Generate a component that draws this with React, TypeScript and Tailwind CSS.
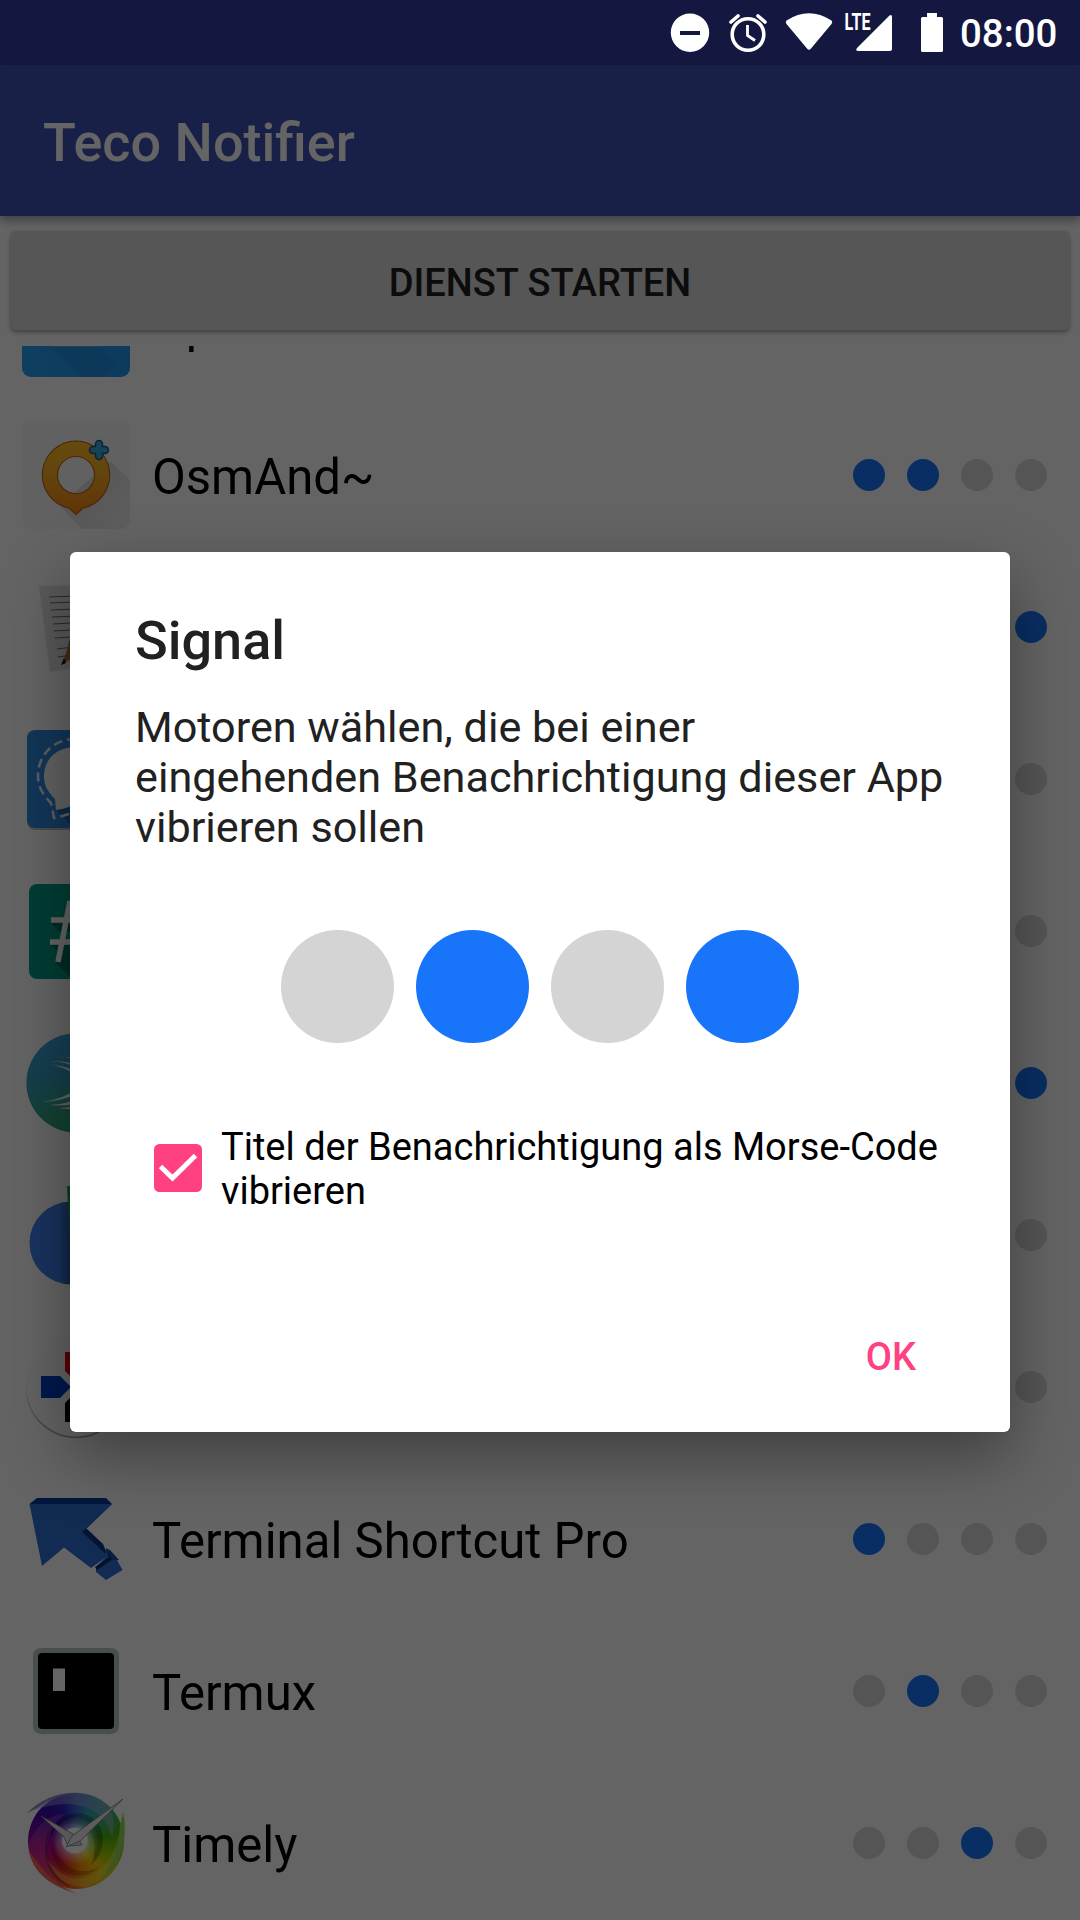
import React from 'react';

const BLUE = 'bg-[#1874f8]';
const GREY = 'bg-[#d4d4d4]';

function Dots({ on, big = false }: { on: number[]; big?: boolean }) {
  return (
    <div className="flex gap-[22px]">
      {[0, 1, 2, 3].map((i) => (
        <span
          key={i}
          className={`${big ? 'size-[113px]' : 'size-8'} rounded-full ${on.includes(i) ? BLUE : GREY}`}
        />
      ))}
    </div>
  );
}

function OpenInIcon() {
  return (
    <svg viewBox="0 0 108 108" className="size-[108px]">
      <defs>
        <linearGradient id="op" x1="0" y1="0" x2="1" y2="0">
          <stop offset="0" stopColor="#259cf0" />
          <stop offset="1" stopColor="#2094ea" />
        </linearGradient>
      </defs>
      <rect width="108" height="108" rx="9" fill="url(#op)" />
      <path d="M29 78H79L94 93L80 108H60Z" fill="#1d80ca" opacity=".35" />
      <rect x="29" y="60" width="50" height="17.800" rx="2" fill="#7f9cb0" />
    </svg>
  );
}

function OsmAndIcon() {
  return (
    <svg viewBox="0 0 108 108" className="size-[108px]">
      <defs>
        <linearGradient id="osm" x1="0" y1="0" x2="0" y2="1">
          <stop offset="0" stopColor="#fdbb24" />
          <stop offset=".45" stopColor="#f6ac22" />
          <stop offset="1" stopColor="#f57f13" />
        </linearGradient>
        <linearGradient id="osmShade" x1="0" y1="0" x2="1" y2="1">
          <stop offset="0.3" stopColor="#d6d6d6" />
          <stop offset="1" stopColor="#eeeeee" />
        </linearGradient>
      </defs>
      <rect width="108" height="108" rx="9" fill="#f3f3f3" />
      <path d="M88 40L108 59V99a9 9 0 0 1-9 9H60L38 85Z" fill="url(#osmShade)" />
      <path
        fillRule="evenodd"
        d="M54 20a34 34 0 0 1 7 67.200L54 93.500L47 87.200a34 34 0 0 1 7-67.200Zm0 15.500a18.500 18.500 0 1 0 0 37a18.500 18.500 0 0 0 0-37Z"
        fill="url(#osm)"
        stroke="#b8601c"
        strokeWidth="1.100"
      />
      <path d="M77 23V35M71 29H83" stroke="#145a86" strokeWidth="8.500" strokeLinecap="round" />
      <path d="M77 23V35M71 29H83" stroke="#3aa6e2" strokeWidth="5.500" strokeLinecap="round" />
    </svg>
  );
}

function NotesIcon() {
  return (
    <svg viewBox="0 0 108 108" className="size-[108px]">
      <path d="M17 13L92 11L95 88L28 99Z" fill="#dedede" />
      <g stroke="#6a6a6a" strokeWidth="1.200">
        <path d="M27 24L80 22M28 30L80 28M29 37L81 35M30 44L82 42M31 51L82 48M32 58L83 55M33 65L83 62M35 76L84 70M36 84L84 77" />
      </g>
      <path d="M40 92L47 71L72 30L84 37L57 80Z" fill="#b06a34" />
      <path d="M46 73L48 66L72 28L68 50Z" fill="#118a1c" />
      <path d="M39 92L42 85L44 90Z" fill="#111" />
    </svg>
  );
}

function SignalIcon() {
  return (
    <svg viewBox="0 0 108 108" className="size-[108px]">
      <rect x="5" y="6" width="98" height="99" rx="8" fill="#000" opacity=".25" />
      <rect x="5" y="5" width="98" height="98" rx="8" fill="#2f88dc" />
      <path d="M34 85L50 81L103 59V95a8 8 0 0 1-8 8H52Z" fill="#2068ac" />
      <path d="M54 22c20 0 32 13 32 29s-12 29-32 29c-4 0-7 3-20 5l-1-11c-8-8-11-14-11-23c0-16 12-29 32-29Z" fill="#f6f6f6" />
      <path
        d="M54 14c24 0 38 17 38 37s-14 37-38 37c-6 0-12 3-22 5l-3-15c-8-8-13-16-13-27c0-20 14-37 38-37Z"
        fill="none"
        stroke="#eee"
        strokeWidth="2.500"
        strokeDasharray="9 5"
      />
    </svg>
  );
}

function SlackIcon() {
  return (
    <svg viewBox="0 0 108 108" className="size-[108px]">
      <rect x="7" y="7" width="94" height="95" rx="8" fill="#009a84" />
      <path d="M29 46L38 55H48V46ZM29 68L38 77H43L48 68ZM34 86L50 102H101V49L70 29Z" fill="#006e5c" />
      <path d="M36 85L48 24M58 85L70 24M29 43H78M28 65H76" stroke="#fafafa" strokeWidth="5.500" fill="none" />
    </svg>
  );
}

function SwiftIcon() {
  return (
    <svg viewBox="0 0 108 108" className="size-[108px]">
      <defs>
        <linearGradient id="swift" x1="0.3" y1="0" x2="0.45" y2="1">
          <stop offset="0" stopColor="#3c9cdc" />
          <stop offset=".5" stopColor="#33a0b4" />
          <stop offset="1" stopColor="#30a866" />
        </linearGradient>
      </defs>
      <circle cx="54" cy="54" r="49.500" fill="#2c8c8c" />
      <circle cx="54" cy="53.500" r="49" fill="url(#swift)" />
      <g fill="#f4f4f4">
        <path d="M20 35Q42 35 60 51V45Q42 35 20 35Z" />
        <path d="M28 32Q46 32 60 42V38Q44 31 28 32ZM36 29Q50 27 60 34V30Q48 27 36 29Z" />
        <path d="M20 73Q40 71 60 57V63Q42 72 20 73Z" />
        <path d="M28 76Q46 75 60 68V72Q46 78 28 76ZM36 79Q50 79 60 75V79Q48 81 36 79Z" />
      </g>
    </svg>
  );
}

function BallIcon() {
  return (
    <svg viewBox="0 0 108 108" className="size-[108px]">
      <defs>
        <linearGradient id="ball" x1="0" y1="0" x2="1" y2="0">
          <stop offset="0" stopColor="#4080f0" />
          <stop offset=".35" stopColor="#3f7ee8" />
          <stop offset=".5" stopColor="#2a559c" />
        </linearGradient>
      </defs>
      <circle cx="49" cy="62" r="41.500" fill="url(#ball)" />
      <path d="M45 5L88 8L85 66L48 66Z" fill="#0ba04c" />
    </svg>
  );
}

function TeamIcon() {
  return (
    <svg viewBox="0 0 108 108" className="size-[108px]">
      <circle cx="54" cy="55.200" r="50" fill="#000" opacity=".35" />
      <circle cx="54" cy="53.500" r="50" fill="#f8f8f8" />
      <path d="M19 43H38L49 54L38 65H19Z" fill="#003cc0" />
      <path d="M43 19H65V38L54 49L43 38Z" fill="#dc000a" />
      <path d="M43 89H65V70L54 59L43 70Z" fill="#050505" />
    </svg>
  );
}

function ArrowIcon() {
  return (
    <svg viewBox="0 0 108 108" className="size-[108px]">
      <path d="M7.500 19L15 13H84L90 19L65 43L48 45Z" fill="#063a9c" />
      <path d="M64 43L81 59L86 71L82 73L59 47Z" fill="#083484" />
      <path d="M7.500 19H90L64.500 43L60 47L86 71L69 83L42 62.500L20 81Z" fill="#2c6cd0" />
      <path d="M84 64L88 65L95 75L100.500 85L84 95L74 87V82L83 73Z" fill="#2c6cd0" />
      <path d="M84 63L90 69L91 74L75 85L73 82L87 72Z" fill="#082c70" />
      <path d="M84 63L89 66L97 75L90 75Z" fill="#1b4ca4" />
    </svg>
  );
}

function TermuxIcon() {
  return (
    <svg viewBox="0 0 108 108" className="size-[108px]">
      <rect x="11" y="11" width="86" height="86" rx="8" fill="#b5c4c2" />
      <rect x="16" y="16" width="76" height="76" rx="4" fill="#000" />
      <rect x="31" y="31.500" width="12" height="22.500" fill="#fafafa" />
    </svg>
  );
}

function TimelyIcon() {
  return (
    <div className="relative size-[108px]">
      <div className="absolute left-[6px] top-[4px] size-[96px] rounded-full bg-[conic-gradient(from_0deg,#3a68c8,#30a0b8_20deg,#38b078_50deg,#48b010_80deg,#98c808_110deg,#f0c808_140deg,#f89008_170deg,#f04818_195deg,#d81850_225deg,#a80090_260deg,#6008a0_290deg,#3808b0_315deg,#3020b8_340deg,#3a68c8)]" />
      <svg viewBox="0 0 108 108" className="absolute left-0 top-0 size-[108px]">
        <defs>
          <radialGradient id="core">
            <stop offset="0" stopColor="#fff" />
            <stop offset=".5" stopColor="#fafafa" />
            <stop offset=".58" stopColor="#fff" stopOpacity=".5" />
            <stop offset="1" stopColor="#fff" stopOpacity="0" />
          </radialGradient>
        </defs>
        <path d="M5 24Q28 2 58 4Q76 5 86 17Q95 30 90 48Q82 22 60 17Q36 11 5 24Z" fill="#b0a8e0" opacity=".45" />
        <path d="M5 24Q28 2 58 4Q34 5 15 19Z" fill="#9884c4" />
        <path d="M101 23Q108 46 98 67Q88 90 64 98Q34 98 24 68Q44 98 70 86Q94 72 98 38Z" fill="#e8f060" opacity=".35" />
        <path d="M101 23Q106 46 97 68Q88 86 78 91Q97 70 98 38Z" fill="#90d458" />
        <path d="M6 56Q8 88 55 105Q24 84 25 58Q27 36 43 25Q18 26 6 56Z" fill="#ff80b0" opacity=".24" />
        <path d="M7 62Q12 92 55 105Q30 96 7 62Z" fill="#f06050" />
        <path d="M27 50Q36 24 58 24Q80 28 81 50Q81 66 69 76Q77 56 68 44Q54 28 38 38Q30 43 27 50Z" fill="#000" opacity=".26" />
        <path d="M25 58Q26 84 48 98Q30 92 24 72Q20 50 30 36Q25 48 25 58Z" fill="#000" opacity=".25" />
        <path d="M36 38Q28 60 42 74Q58 88 78 78Q58 94 38 80Q22 64 36 38Z" fill="#000" opacity=".2" />
        <circle cx="53" cy="51.500" r="24" fill="url(#core)" />
        <path d="M19 27L51 45L57 51L60 56L46 57L42 48Z" fill="#ddd" stroke="#777" strokeWidth=".8" />
        <path d="M101 10L58 52L44 58L50 47Z" fill="#e8e8e8" stroke="#777" strokeWidth=".8" />
      </svg>
    </div>
  );
}

// Rows fully covered by the dialog carry no visible label.
const rows = [
  { name: 'OpenIn', Icon: OpenInIcon, on: [0] },
  { name: 'OsmAnd~', Icon: OsmAndIcon, on: [0, 1] },
  { name: '', Icon: NotesIcon, on: [3] },
  { name: '', Icon: SignalIcon, on: [1] },
  { name: '', Icon: SlackIcon, on: [0] },
  { name: '', Icon: SwiftIcon, on: [3] },
  { name: '', Icon: BallIcon, on: [0] },
  { name: '', Icon: TeamIcon, on: [1] },
  { name: 'Terminal Shortcut Pro', Icon: ArrowIcon, on: [0] },
  { name: 'Termux', Icon: TermuxIcon, on: [1] },
  { name: 'Timely', Icon: TimelyIcon, on: [2] },
];

function StatusBar() {
  return (
    <div className="flex h-[65px] items-center justify-end pr-[22px] text-white">
      <svg viewBox="670 0 230 65" className="h-[65px] w-[230px]" fill="currentColor">
        <path fillRule="evenodd" d="M690 13.500a19.200 19.200 0 1 0 0 38.400a19.200 19.200 0 0 0 0-38.400ZM680 31h20v4h-20Z" />
        <g fill="none" stroke="currentColor">
          <circle cx="748" cy="34.500" r="15.800" strokeWidth="3.600" />
          <path d="M747.500 25V35.500L755 40.500" strokeWidth="2.800" />
          <path d="M738 16L731 22M758 16L765 22" strokeWidth="3.600" strokeLinecap="round" />
        </g>
        <path d="M786.500 20.500Q809 6 831.500 20.500Q833 22 831.500 24L811 48.500Q809 51 807 48.500L786.500 24Q785 22 786.500 20.500Z" />
        <path d="M889.500 15.500Q892 14 892 17V49Q892 51 890 51H858Q855 50.500 857 48Z" />
        <text x="844.500" y="30" fontSize="23" fontWeight="700" fontFamily="Roboto" textLength="26" lengthAdjust="spacingAndGlyphs">LTE</text>
      </svg>
      <svg viewBox="0 0 22 39" className="ml-[21px] h-[39px] w-[22px]" fill="currentColor">
        <path d="M6 0H16V4H20.500Q22 4 22 5.500V37.500Q22 39 20.500 39H1.500Q0 39 0 37.500V5.500Q0 4 1.500 4H6Z" />
      </svg>
      <span className="ml-[17px] w-[98px] whitespace-nowrap pt-[3px] text-[38.400px] font-medium leading-[62px]">08:00</span>
    </div>
  );
}

export default function App() {
  return (
    <div className="relative h-[1920px] w-[1080px] overflow-hidden bg-[#fafafa] font-['Roboto',sans-serif]">
      <div className="flex h-full flex-col">
        <div className="h-[65px] shrink-0 bg-[#343ea0]" />
        <header className="flex h-[151px] shrink-0 items-center bg-[#3f51b5] pl-[43px] pt-[5px] shadow-[0_4px_10px_rgba(0,0,0,0.4)]">
          <h1 className="text-[54px] font-medium leading-none text-[#fafafa]">Teco Notifier</h1>
        </header>
        <div className="shrink-0 px-[11px] pb-4 pt-[15px]">
          <button className="flex h-[99px] w-full items-center justify-center rounded-[5px] bg-[#d6d6d6] pt-[5px] text-[38px] font-medium text-[#202020] shadow-[0_2px_5px_rgba(0,0,0,0.4)]">
            DIENST STARTEN
          </button>
        </div>
        <div className="flex min-h-0 flex-1 flex-col justify-end overflow-hidden">
          <ul className="mb-px">
            {rows.map(({ name, Icon, on }, i) => (
              <li key={i} className="flex h-[152px] items-center pl-[22px] pr-[33px]">
                <Icon />
                <span className="ml-[22px] flex-1 whitespace-nowrap pt-[6px] text-[49.100px] leading-none text-black">{name}</span>
                <Dots on={on} />
              </li>
            ))}
          </ul>
        </div>
      </div>

      <div className="absolute inset-0 flex flex-col bg-black/60">
        <StatusBar />
        <div className="mx-[70px] mt-[487px] flex h-[880px] flex-col rounded-[6px] bg-white px-[65px] pt-[61px] shadow-[0_24px_64px_rgba(0,0,0,0.38)]">
          <h2 className="text-[54px] font-medium leading-[56px] text-[#212121]">Signal</h2>
          <p className="mt-[34px] whitespace-nowrap text-[43.200px] leading-[50px] text-[#212121]">
            Motoren wählen, die bei einer
            <br />
            eingehenden Benachrichtigung dieser App
            <br />
            vibrieren sollen
          </p>
          <div className="mt-[77px] flex justify-center">
            <Dots on={[1, 3]} big />
          </div>
          <div className="mt-[82px] flex items-center pl-[19px]">
            <svg viewBox="0 0 48 48" className="mb-[3px] size-[48px]">
              <rect width="48" height="48" rx="5.500" fill="#ff4081" />
              <path d="M6.500 22.500L18.500 34L41.500 11.500" fill="none" stroke="#fff" strokeWidth="5" />
            </svg>
            <p className="ml-[19px] whitespace-nowrap text-[38px] leading-[44px] text-black">
              Titel der Benachrichtigung als Morse-Code
              <br />
              vibrieren
            </p>
          </div>
          <div className="mt-[122px] flex justify-end pr-[29px]">
            <button className="text-[38px] font-medium leading-[44px] text-[#ff4081]">OK</button>
          </div>
        </div>
      </div>
    </div>
  );
}
